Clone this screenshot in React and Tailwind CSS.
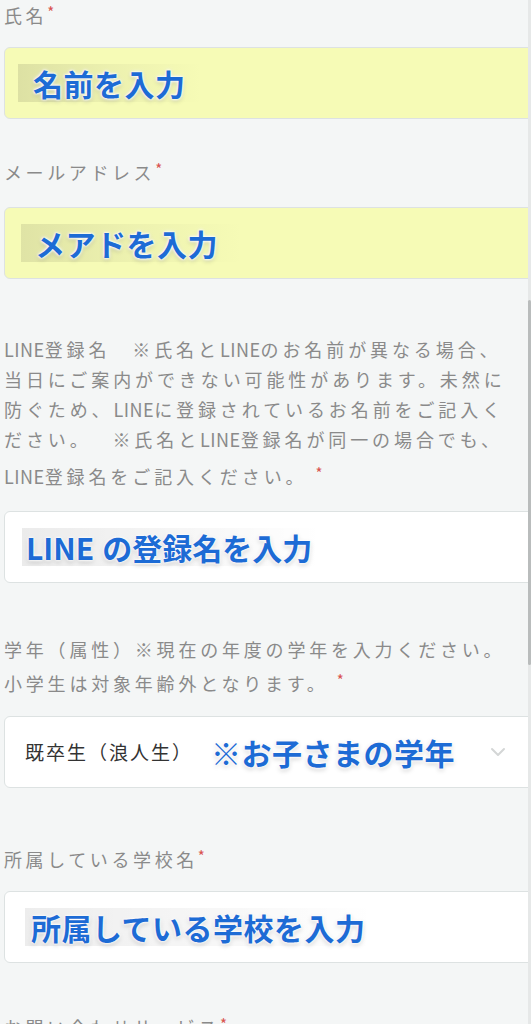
import { FiChevronDown } from "react-icons/fi";

const jp = { fontFamily: '"Noto Sans CJK JP", "Noto Sans", sans-serif' };

function Req({ className = "ml-0" }) {
  return (
    <span className={`relative -top-[5px] text-[15px] leading-none tracking-normal text-[#d9534f] ${className}`}>*</span>
  );
}

function L({ children }) {
  // latin runs in the labels are not spaced out like the kana
  return <span className="tracking-[0.5px]">{children}</span>;
}

function Hint({ children, className = "" }) {
  // the blue callout written over the screenshot
  return (
    <span
      className={`inline-block font-bold text-[30px] leading-[38px] tracking-[0.5px] text-[#1d6bd5] [text-shadow:0_0_2px_#fff,0_0_3px_#fff,0_0_4px_#fff,0_2px_5px_rgba(0,0,0,0.22)] ${className}`}
    >
      {children}
    </span>
  );
}

function Field({ yellow, children, className = "" }) {
  return (
    <div
      className={`-mr-4 flex h-[72px] items-center rounded-[6px] border border-[#dde2e2] ${
        yellow ? "bg-[#f6fbb6]" : "bg-white"
      } ${className}`}
    >
      {children}
    </div>
  );
}

export default function App() {
  return (
    <div
      style={jp}
      className="relative h-[1024px] overflow-hidden bg-[#f4f6f6] pl-1 pt-px text-[18px] tracking-[3.6px] text-[#8a8a8a]"
    >
      {/* scrollbar */}
      <div className="absolute right-0 top-0 h-full w-[3px] bg-[#e6e8e8]" />
      <div className="absolute right-0 top-[300px] h-[365px] w-[3px] rounded bg-[#b9bcbc]" />

      <div className="-mt-px leading-[30px]">
        氏名
        <Req />
      </div>
      <Field yellow className="mt-[17px]">
        <span className="ml-[13px] bg-gradient-to-r from-[rgba(120,120,90,0.2)] via-[rgba(120,120,90,0.08)] to-transparent px-[15px]">
          <Hint>名前を入力</Hint>
        </span>
      </Field>

      <div className="mt-[38px] leading-[30px]">
        メールアドレス
        <Req />
      </div>
      <Field yellow className="mt-[20px]">
        <span className="ml-[16px] bg-gradient-to-r from-[rgba(120,120,90,0.18)] via-[rgba(120,120,90,0.07)] to-transparent pl-[14px] pr-[24px]">
          <Hint>メアドを入力</Hint>
        </span>
      </Field>

      <div className="mt-[55px] leading-[30px] tracking-[3.9px]">
        <p className="whitespace-nowrap">
          <L>LINE</L>登録名　※氏名と<L>LINE</L>のお名前が異なる場合、
        </p>
        <p className="whitespace-nowrap">当日にご案内ができない可能性があります。未然に</p>
        <p className="whitespace-nowrap">
          防ぐため、<L>LINE</L>に登録されているお名前をご記入く
        </p>
        <p className="whitespace-nowrap">
          ださい。　 ※氏名と<L>LINE</L>登録名が同一の場合でも、
        </p>
        <p className="mt-[7px] whitespace-nowrap">
          <L>LINE</L>登録名をご記入ください。
          <Req className="ml-2" />
        </p>
      </div>
      <Field className="mt-[20px]">
        <span className="ml-[17px] bg-gradient-to-r from-[rgba(0,0,0,0.08)] to-transparent pl-[4px] pr-[10px]">
          <Hint className="tracking-[0px]">
            LINE<span className="ml-2">の登録名を入力</span>
          </Hint>
        </span>
      </Field>

      <div className="mt-[51px] leading-[30px] tracking-[3.8px]">
        <p className="whitespace-nowrap">学年（属性）※現在の年度の学年を入力ください。</p>
        <p className="mt-[4px] whitespace-nowrap">
          小学生は対象年齢外となります。
          <Req className="ml-2" />
        </p>
      </div>
      <Field className="mt-[18px] pr-4">
        <span className="ml-[20px] text-[19px] tracking-[2px] text-[#333]">既卒生（浪人生）</span>
        <Hint className="ml-[18px]">※お子さまの学年</Hint>
        <FiChevronDown className="ml-auto mr-[20px] h-6 w-6 text-[#d4d6d6]" />
      </Field>

      <div className="mt-[56px] leading-[30px]">
        所属している学校名
        <Req />
      </div>
      <Field className="mt-[17px]">
        <span className="ml-[20px] bg-gradient-to-r from-[rgba(0,0,0,0.07)] to-transparent pl-[6px] pr-[10px]">
          <Hint>所属している学校を入力</Hint>
        </span>
      </Field>

      <div className="mt-[49px] leading-[30px]">
        お問い合わせサービス
        <Req />
      </div>
    </div>
  );
}
